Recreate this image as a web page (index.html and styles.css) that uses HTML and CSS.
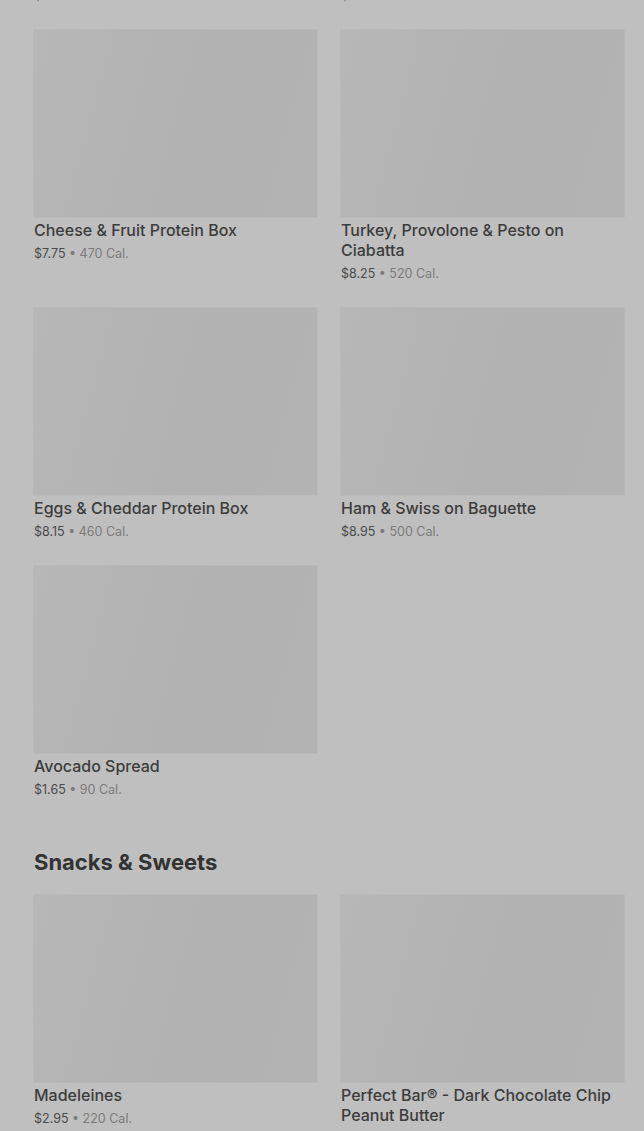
FILE: index.html
```html
<!DOCTYPE html>
<html lang="en">
<head>
    <meta charset="UTF-8">
    <meta name="viewport" content="width=device-width, initial-scale=1.0">
    <title>Menu</title>
    <link rel="stylesheet" href="styles.css">
</head>
<body>
    <div class="page">
        <!-- previous section (scrolled past) -->
        <section class="section">
            <div class="grid">
                <div class="card">
                    <div class="thumb"></div>
                    <h3 class="card-title">Chicken &amp; Hummus Protein Box</h3>
                    <p class="card-meta"><span class="price">$8.45</span> • 420 Cal.</p>
                </div>
                <div class="card">
                    <div class="thumb"></div>
                    <h3 class="card-title">Bacon &amp; Gouda Sandwich</h3>
                    <p class="card-meta"><span class="price">$5.95</span> • 360 Cal.</p>
                </div>
                <div class="card">
                    <div class="thumb"></div>
                    <h3 class="card-title">Cheese &amp; Fruit Protein Box</h3>
                    <p class="card-meta"><span class="price">$7.75</span> • 470 Cal.</p>
                </div>
                <div class="card">
                    <div class="thumb"></div>
                    <h3 class="card-title">Turkey, Provolone &amp; Pesto on Ciabatta</h3>
                    <p class="card-meta"><span class="price">$8.25</span> • 520 Cal.</p>
                </div>
                <div class="card">
                    <div class="thumb"></div>
                    <h3 class="card-title">Eggs &amp; Cheddar Protein Box</h3>
                    <p class="card-meta"><span class="price">$8.15</span> • 460 Cal.</p>
                </div>
                <div class="card">
                    <div class="thumb"></div>
                    <h3 class="card-title">Ham &amp; Swiss on Baguette</h3>
                    <p class="card-meta"><span class="price">$8.95</span> • 500 Cal.</p>
                </div>
                <div class="card">
                    <div class="thumb"></div>
                    <h3 class="card-title">Avocado Spread</h3>
                    <p class="card-meta"><span class="price">$1.65</span> • 90 Cal.</p>
                </div>
            </div>
        </section>

        <!-- Snacks & Sweets -->
        <section class="section">
            <h2 class="section-title">Snacks &amp; Sweets</h2>
            <div class="grid">
                <div class="card">
                    <div class="thumb"></div>
                    <h3 class="card-title">Madeleines</h3>
                    <p class="card-meta"><span class="price">$2.95</span> • 220 Cal.</p>
                </div>
                <div class="card">
                    <div class="thumb"></div>
                    <h3 class="card-title">Perfect Bar® - Dark Chocolate Chip Peanut Butter</h3>
                    <p class="card-meta"><span class="price">$3.45</span> • 330 Cal.</p>
                </div>
            </div>
        </section>
    </div>
</body>
</html>
```

FILE: styles.css
```css
* {
    margin: 0;
    padding: 0;
    box-sizing: border-box;
}
body {
    background: #bfbfbf;
    font-family: Inter, "Liberation Sans", sans-serif;
    color: #3c3c3c;
    overflow: hidden;
}

/* page is scrolled: first row sits above the viewport */
.page {
    margin-top: -228px;
    padding: 0 20px 0 34px;
}
.section + .section {
    margin-top: 48px;
}
.section-title {
    font-size: 22px;
    line-height: 28px;
    font-weight: 700;
    color: #333;
    margin-bottom: 19px;
}
.grid {
    display: grid;
    grid-template-columns: 1fr 1fr;
    column-gap: 24px;
    row-gap: 24px;
    align-items: start;
}
.thumb {
    height: 187px;
    background: linear-gradient(105deg, #b7b7b7 0%, #b4b4b4 25%, #b2b2b2 60%, #b3b3b3 100%);
    box-shadow: 0 0 0 1px #b9b9b9;
}
.card-title {
    margin-top: 3px;
    font-size: 16px;
    line-height: 20px;
    font-weight: 500;
    color: #3c3c3c;
}
.card-meta {
    margin-top: 4px;
    font-size: 12.5px;
    line-height: 20px;
    color: #7b7b7b;
}
.price {
    color: #4a4a4a;
}
```
